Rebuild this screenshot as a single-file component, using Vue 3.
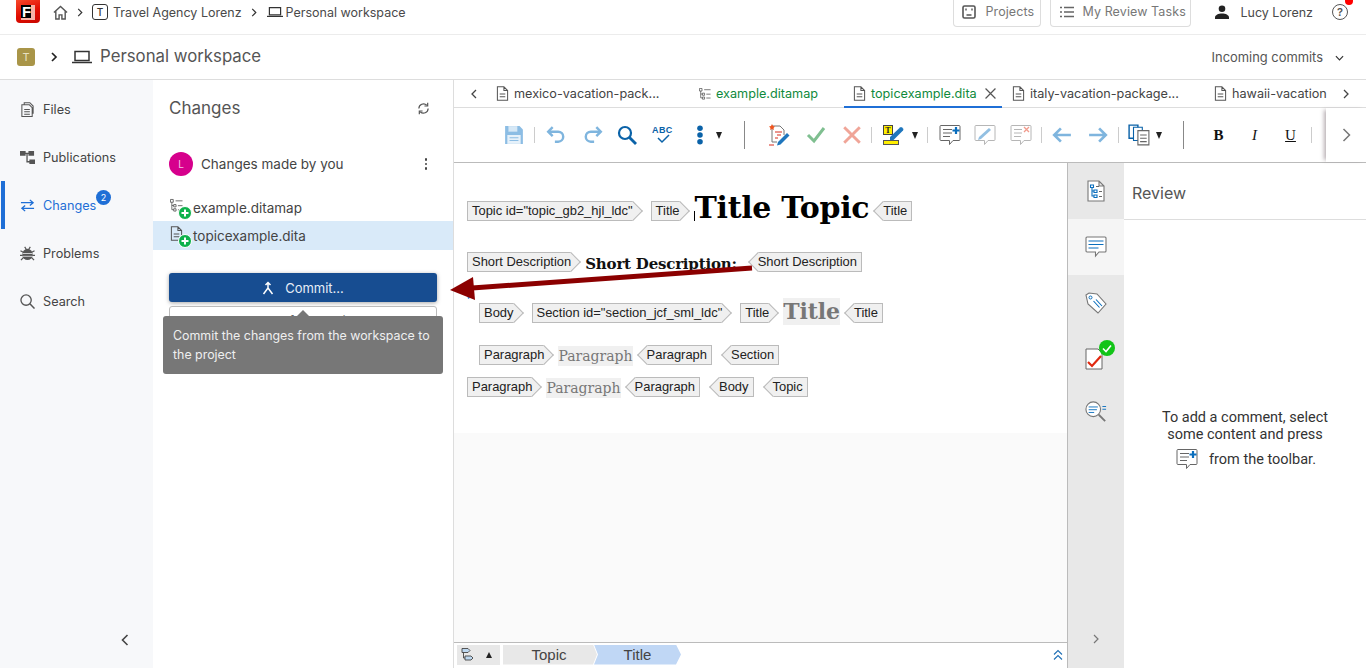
<template>
  <div class="app">
    <svg class="defs" aria-hidden="true">
      <symbol id="doc" viewBox="0 0 14 16">
        <path d="M1.5.8h7l4 4v10.4h-11z M8.5.8v4h4" fill="none" stroke="#555" stroke-width="1.1" />
        <path d="M4 8.500h6M4 11.500h6" stroke="#555" stroke-width="1.1" />
      </symbol>
      <symbol id="map" viewBox="0 0 14 14">
        <path d="M.5.500h3v3h-3zM4 6h2.500v2.500H4zM4 10.500h2.500V13H4z" fill="none" stroke="#555" stroke-width=".9" />
        <path d="M2 3.500V11.500h2M2 7h2M6 2h7.500M8.500 7.200h5M8.500 11.700h5" fill="none" stroke="#555" stroke-width=".9" />
      </symbol>
      <symbol id="laptop" viewBox="0 0 20 14">
        <path d="M3 1.500h14v9H3z" fill="none" stroke="#333" stroke-width="1.500" />
        <path d="M0 12.500h20" stroke="#333" stroke-width="1.500" />
      </symbol>
      <symbol id="comment-plus" viewBox="0 0 22 22">
        <path d="M2 1.500h18a1 1 0 0 1 1 1v13a1 1 0 0 1-1 1h-6l-3.500 4v-4H2a1 1 0 0 1-1-1v-13a1 1 0 0 1 1-1z" fill="#fff" stroke="#666" />
        <path d="M4 5.500h9M4 9h9M4 12.500h7" stroke="#666" />
        <path d="M17 3v7M13.500 6.500h7" stroke="#0a6ebd" stroke-width="2.200" />
      </symbol>
      <symbol id="add-badge" viewBox="0 0 14 14">
        <circle cx="7" cy="7" r="6.500" fill="#0db14b" stroke="#fff" />
        <path d="M7 3.500v7M3.500 7h7" stroke="#fff" stroke-width="2" />
      </symbol>
    </svg>

    <header class="topbar">
      <div class="logo"><span class="logo-f">F</span></div>
      <nav class="crumbs">
        <svg class="home" viewBox="0 0 16 16"><path d="M1 8l7-6.500L15 8M3 6.500V15h3.500v-4.500h3V15H13V6.500" fill="none" stroke="#555" stroke-width="1.500" /></svg>
        <svg class="chev-sm" viewBox="0 0 6 10"><path d="M1 1l4 4-4 4" fill="none" stroke="#333" stroke-width="1.300" /></svg>
        <span class="t-box">T</span>
        <span class="crumb-text">Travel Agency Lorenz</span>
        <svg class="chev-sm" viewBox="0 0 6 10"><path d="M1 1l4 4-4 4" fill="none" stroke="#333" stroke-width="1.300" /></svg>
        <svg class="laptop-sm"><use href="#laptop" /></svg>
        <span class="crumb-text">Personal workspace</span>
      </nav>
      <div class="top-right">
        <button class="top-btn top-btn--projects">
          <svg viewBox="0 0 14 14"><rect x="1" y="1" width="12" height="12" rx="1.500" fill="none" stroke="#555" stroke-width="1.600" /><path d="M4 3.500v2M10 3.500v2M4.500 10h5" stroke="#555" stroke-width="1.400" /></svg>
          Projects
        </button>
        <button class="top-btn top-btn--tasks">
          <svg viewBox="0 0 14 12"><path d="M0 1.500h2M4 1.500h10M0 6h2M4 6h10M0 10.500h2M4 10.500h10" stroke="#666" stroke-width="1.400" /></svg>
          My Review Tasks
        </button>
        <svg class="user" viewBox="0 0 14 14"><circle cx="7" cy="3.800" r="3.300" fill="#222" /><path d="M0 14v-1.500C0 10 3.500 8.500 7 8.500s7 1.500 7 4V14z" fill="#222" /></svg>
        <span class="user-name">Lucy Lorenz</span>
        <span class="help">?<i class="help-dot"></i></span>
      </div>
    </header>

    <div class="subbar">
      <span class="project-badge">T</span>
      <svg class="chev-md" viewBox="0 0 7 10"><path d="M1 1l4 4-4 4" fill="none" stroke="#222" stroke-width="1.700" /></svg>
      <svg class="laptop-md"><use href="#laptop" /></svg>
      <span class="workspace">Personal workspace</span>
      <span class="incoming">Incoming commits</span>
      <svg class="chev-down" viewBox="0 0 10 6"><path d="M1 1l4 4 4-4" fill="none" stroke="#333" stroke-width="1.300" /></svg>
    </div>

    <main class="main">
      <aside class="sidenav">
        <a v-for="item in navItems" :key="item.label" class="nav-item" :class="{ 'nav-item--active': item.active }">
          <svg class="nav-icon" viewBox="0 0 16 16" v-html="item.icon"></svg>
          <span>{{ item.label }}</span>
          <span v-if="item.active" class="nav-badge">2</span>
        </a>
        <svg class="collapse" viewBox="0 0 8 12"><path d="M6.500 1L1.500 6l5 5" fill="none" stroke="#444" stroke-width="1.600" /></svg>
      </aside>

      <section class="changes">
        <div class="changes-head">
          <h2>Changes</h2>
          <svg class="refresh" viewBox="0 0 14 14"><path d="M2 7a5 5 0 0 1 8.500-3.500M12 7a5 5 0 0 1-8.500 3.500" fill="none" stroke="#555" stroke-width="1.300" /><path d="M11.500 .8v3.500H8M2.500 13.200V9.700H6" fill="none" stroke="#555" stroke-width="1.300" /></svg>
        </div>
        <div class="by-you">
          <span class="avatar">L</span>
          <span class="by-you-text">Changes made by you</span>
          <span class="kebab"><i></i><i></i><i></i></span>
        </div>
        <ul class="files">
          <li v-for="file in changedFiles" :key="file.name" :class="{ selected: file.selected }">
            <span class="file-icon">
              <svg class="file-glyph"><use :href="file.icon" /></svg>
              <svg class="file-add"><use href="#add-badge" /></svg>
            </span>
            {{ file.name }}
          </li>
        </ul>
        <div class="actions">
          <button class="commit">
            <svg viewBox="0 0 12 14"><path d="M6 1.500V7L1.500 13M6 7l4.500 6M3.500 4L6 1.500 8.500 4" fill="none" stroke="#fff" stroke-width="1.500" /></svg>
            Commit...
          </button>
          <button class="secondary">Update from Project</button>
          <div class="tooltip">Commit the changes from the workspace to the project</div>
        </div>
      </section>

      <section class="editor">
        <div class="tabs">
          <svg class="tab-nav" viewBox="0 0 6 10"><path d="M5 1L1 5l4 4" fill="none" stroke="#444" stroke-width="1.300" /></svg>
          <div class="tab tab--mexico"><svg><use href="#doc" /></svg>mexico-vacation-pack...</div>
          <div class="tab tab--map tab--green"><svg class="map-icon"><use href="#map" /></svg>example.ditamap</div>
          <div class="tab tab--active tab--green">
            <svg><use href="#doc" /></svg>topicexample.dita
            <svg class="tab-close" viewBox="0 0 10 10"><path d="M.5.500l9 9M9.500.500l-9 9" stroke="#555" stroke-width="1.100" /></svg>
          </div>
          <div class="tab tab--italy"><svg><use href="#doc" /></svg>italy-vacation-package...</div>
          <div class="tab tab--hawaii"><svg><use href="#doc" /></svg>hawaii-vacation</div>
          <svg class="tab-nav tab-nav--right" viewBox="0 0 6 10"><path d="M1 1l4 4-4 4" fill="none" stroke="#444" stroke-width="1.300" /></svg>
        </div>

        <div class="toolbar">
          <span class="tb w36"><svg viewBox="0 0 18 18"><path d="M1 1h13l3 3v13H1z" fill="#8cbde4" /><path d="M4 1h8v5H4z" fill="#d6e8f6" /><path d="M3 9h12v8H3z" fill="#e6f1fa" /><path d="M5 11.500h8M5 14h8" stroke="#8cbde4" /></svg></span>
          <i class="sep"></i>
          <span class="tb w38"><svg viewBox="0 0 18 18"><path d="M6 2L2 6l4 4" fill="none" stroke="#7fb5de" stroke-width="2.200" /><path d="M2.500 6H11a4.500 4.500 0 0 1 0 9H8" fill="none" stroke="#7fb5de" stroke-width="2.200" /></svg></span>
          <span class="tb w36"><svg viewBox="0 0 18 18"><path d="M12 2l4 4-4 4" fill="none" stroke="#7fb5de" stroke-width="2.200" /><path d="M15.500 6H7a4.500 4.500 0 0 0 0 9h3" fill="none" stroke="#7fb5de" stroke-width="2.200" /></svg></span>
          <span class="tb w32"><svg viewBox="0 0 20 20"><circle cx="8" cy="8" r="6" fill="none" stroke="#0a62a8" stroke-width="2.200" /><path d="M12.500 12.500L19 19" stroke="#0a62a8" stroke-width="2.800" /></svg></span>
          <span class="tb w40"><svg class="wide" viewBox="0 0 22 20"><text x="0" y="8" class="abc">ABC</text><path d="M6 13l4 4 7-7" fill="none" stroke="#0a62a8" stroke-width="1.500" /></svg></span>
          <span class="tb w34"><svg viewBox="0 0 6 18"><circle cx="3" cy="3" r="2.500" fill="#0a62a8" /><circle cx="3" cy="9" r="2.500" fill="#0a62a8" /><circle cx="3" cy="15" r="2.500" fill="#0a62a8" /></svg></span>
          <span class="caret"></span>
          <i class="sep sep--tall"></i>
          <span class="tb w36"><svg class="wide" viewBox="0 0 22 22"><path d="M4 2h8l4 4v5M4 2v16h5" fill="#fff" stroke="#777" /><path d="M7 8h7M9 11h4M7 14h3M1 21h5" stroke="#d92c1e" stroke-width="1.200" /><path d="M4 0l1 2 2 .5-1.500 1.500.5 2-2-1-2 1 .5-2L1 2.500 3 2z" fill="#f0541e" /><path d="M10 18l9-9 2.500 2.500-9 9-3.500 1z" fill="#1f76bd" /></svg></span>
          <span class="tb w38"><svg viewBox="0 0 20 18"><path d="M2 9l6 6L18 2" fill="none" stroke="#7fbf90" stroke-width="3" /></svg></span>
          <span class="tb w34"><svg viewBox="0 0 18 18"><path d="M2 2l14 14M16 2L2 16" stroke="#f0a598" stroke-width="2.600" /></svg></span>
          <i class="sep"></i>
          <span class="tb w40"><svg class="wide" viewBox="0 0 22 20"><rect x=".5" y=".5" width="9" height="9" fill="#ffee00" stroke="#444" /><text x="2.200" y="8" class="hl-t">T</text><path d="M7 12L17 2.500a1.500 1.500 0 0 1 2 0l1 1a1.500 1.500 0 0 1 0 2L10.500 15H7z" fill="#1f76bd" /><rect x=".5" y="15.500" width="15" height="4" fill="#ffee00" stroke="#555" /></svg></span>
          <span class="caret"></span>
          <i class="sep sep--after-caret"></i>
          <span class="tb w35"><svg class="wide"><use href="#comment-plus" /></svg></span>
          <span class="tb w36 faded"><svg class="wide" viewBox="0 0 22 22"><path d="M2 1.500h18a1 1 0 0 1 1 1v13a1 1 0 0 1-1 1h-6l-3.500 4v-4H2a1 1 0 0 1-1-1v-13a1 1 0 0 1 1-1z" fill="#fff" stroke="#aaa" /><path d="M5 13l10-9 2 2-10 9-3 1z" fill="#7fb5de" /></svg></span>
          <span class="tb w36 faded"><svg class="wide" viewBox="0 0 22 22"><path d="M2 1.500h18a1 1 0 0 1 1 1v13a1 1 0 0 1-1 1h-6l-3.500 4v-4H2a1 1 0 0 1-1-1v-13a1 1 0 0 1 1-1z" fill="#fff" stroke="#aaa" /><path d="M4 5.500h8M4 9h8M4 12.500h7" stroke="#aaa" /><path d="M14 3l5 5M19 3l-5 5" stroke="#ef8a78" stroke-width="1.300" /></svg></span>
          <i class="sep"></i>
          <span class="tb w36"><svg viewBox="0 0 18 14"><path d="M8 1L2 7l6 6M2 7h15" fill="none" stroke="#7fb5de" stroke-width="2.400" /></svg></span>
          <span class="tb w36"><svg viewBox="0 0 18 14"><path d="M10 1l6 6-6 6M16 7H1" fill="none" stroke="#7fb5de" stroke-width="2.400" /></svg></span>
          <i class="sep"></i>
          <span class="tb w36"><svg class="wide" viewBox="0 0 20 20"><path d="M1 1h8v12H1z" fill="#fff" stroke="#0a62a8" stroke-width="1.300" /><path d="M5 3h8v12H5z" fill="#fff" stroke="#0a62a8" /><path d="M9 6h10v13H9z" fill="#fff" stroke="#666" /><path d="M11 10h6M11 13h6M11 16h6" stroke="#666" /></svg></span>
          <span class="caret"></span>
          <i class="sep sep--tall sep--fmt"></i>
          <span class="tb w36 fmt fmt--b">B</span>
          <span class="tb w36 fmt fmt--i">I</span>
          <span class="tb w36 fmt fmt--u">U</span>
          <i class="sep"></i>
          <div class="tb-more">
            <svg viewBox="0 0 8 14"><path d="M1 1l6 6-6 6" fill="none" stroke="#777" stroke-width="1.500" /></svg>
          </div>
        </div>

        <div class="editor-body">
          <div class="canvas">
            <div class="doc">
              <div v-for="row in docRows" :key="row.id" class="doc-row" :class="row.cls">
                <template v-for="(part, i) in row.parts" :key="i">
                  <span v-if="part.tag" class="tag" :class="part.tag === 'end' ? 'tag--end' : 'tag--start'">{{ part.text }}</span>
                  <span v-else class="content" :class="part.cls">{{ part.text }}</span>
                </template>
              </div>
            </div>
            <div class="breadcrumb">
              <span class="bc-outline">
                <svg viewBox="0 0 14 14"><path d="M.5.500h6l2 2-2 2h-6zM3.500 8h6l2 2-2 2h-6z" fill="#bcd7ef" stroke="#444" stroke-width=".9" /><path d="M2 4.500V10h1.500" fill="none" stroke="#444" stroke-width=".9" /></svg>
                <span class="caret caret--bc"></span>
              </span>
              <span class="bc-item">Topic</span>
              <span class="bc-item bc-item--active">Title</span>
              <svg class="bc-up" viewBox="0 0 10 12"><path d="M1 5.500l4-4 4 4M1 10.500l4-4 4 4" fill="none" stroke="#1f6fb5" stroke-width="1.100" /></svg>
            </div>
          </div>

          <aside class="side-tabs">
            <div class="side-tab"><svg viewBox="0 0 18 22"><path d="M1 1h11l5 5v15H1z M12 1v5h5" fill="#fff" stroke="#777" stroke-width="1.100" /><path d="M3.500 5h3v2.500h-3zM7 10h3v2.500H7zM7 15h3v2.500H7zM5 7.500V16h2M5 11h2" fill="none" stroke="#0a6ebd" stroke-width="1.100" /><path d="M9 6.500h3M12 11.500h3M12 16.500h3" stroke="#666" /></svg></div>
            <div class="side-tab side-tab--active"><svg viewBox="0 0 22 22"><path d="M2 1h18a1 1 0 0 1 1 1v13a1 1 0 0 1-1 1h-6l-3.500 4v-4H2a1 1 0 0 1-1-1V2a1 1 0 0 1 1-1z" fill="#fff" stroke="#777" stroke-width="1.100" /><path d="M3.500 5h15M3.500 8.500h15M3.500 12h10" stroke="#0a6ebd" stroke-width="1.100" /></svg></div>
            <div class="side-tab"><svg viewBox="0 0 22 22"><path d="M1 3l3-2 8 1 9 10-8 9L3 12z" fill="#fff" stroke="#777" stroke-width="1.100" /><circle cx="5.500" cy="5.500" r="1.500" fill="none" stroke="#0a6ebd" /><path d="M8.500 9l6 6.500M11 7.500l6 6.500" stroke="#0a6ebd" stroke-width="1.100" /></svg></div>
            <div class="side-tab side-tab--check">
              <svg viewBox="0 0 18 22"><path d="M1 1h12l4 4v16H1z" fill="#fff" stroke="#666" /><path d="M3 14l4 4 9-10" fill="none" stroke="#e0280f" stroke-width="2.200" /></svg>
              <span class="check-badge"><svg viewBox="0 0 16 16"><circle cx="8" cy="8" r="8" fill="#12c418" /><path d="M4 8.500l3 3 5-6" fill="none" stroke="#fff" stroke-width="1.600" /></svg></span>
            </div>
            <div class="side-tab side-tab--search"><svg viewBox="0 0 24 24"><circle cx="9" cy="9" r="8" fill="#fff" stroke="#777" stroke-width="1.200" /><path d="M4 6.500h10M4 9.500h9M4 12.500h6" stroke="#0a6ebd" /><path d="M15 15l7 7" stroke="#777" stroke-width="2" /><path d="M19 6h4M19 9h4" stroke="#0a6ebd" /></svg></div>
            <svg class="side-collapse" viewBox="0 0 6 10"><path d="M1 1l4 4-4 4" fill="none" stroke="#777" stroke-width="1.200" /></svg>
          </aside>

          <section class="review">
            <h3>Review</h3>
            <div class="review-msg">
              <p>To add a comment, select<br />some content and press</p>
              <p class="review-line"><svg><use href="#comment-plus" /></svg>from the toolbar.</p>
            </div>
          </section>
        </div>
      </section>
    </main>

    <svg class="arrow" viewBox="0 0 320 40">
      <path d="M17 33l3 4-2 1z" fill="#2f86e0" />
      <path d="M302 7L22 27" stroke="#8b0000" stroke-width="5" />
      <path d="M0 29L23 16l2 23z" fill="#8b0000" />
    </svg>
  </div>
</template>

<script setup>
const navItems = [
  { label: 'Files', icon: '<path d="M2 3h8l3 3v9.500H2zM4.500 3V.8h6l3.500 3.500V12h-1" fill="none" stroke="#555" stroke-width="1.100" /><path d="M4.500 8h6M4.500 10.500h6M4.500 13h6" stroke="#555" stroke-width="1.100" />' },
  { label: 'Publications', icon: '<path d="M0 1h6v5H0zM9 1h6v5H9zM10 10h6v5h-6z" fill="#555" /><path d="M5 3.500h5M7.500 4v8.500H11" fill="none" stroke="#555" stroke-width="1.400" />' },
  { label: 'Changes', active: true, icon: '<path d="M1 5h13M10.500 2l3.500 3-3.500 3M15 11H2M5.500 8L2 11l3.500 3" fill="none" stroke="#1f6fd6" stroke-width="1.400" />' },
  { label: 'Problems', icon: '<ellipse cx="8" cy="9" rx="5.500" ry="6" fill="#555" /><path d="M.5 5l3.500 2M15.500 5L12 7M0 10h3M16 10h-3M1 15l3-3M15 15l-3-3M5 1l2 3M11 1L9 4" stroke="#555" stroke-width="1.300" /><path d="M3 8h10M3 11h10" stroke="#f7f8fa" stroke-width=".8" />' },
  { label: 'Search', icon: '<circle cx="6.500" cy="6.500" r="5.500" fill="none" stroke="#555" stroke-width="1.400" /><path d="M10.500 10.500L15.500 15.500" stroke="#555" stroke-width="1.600" />' }
]

const changedFiles = [
  { name: 'example.ditamap', icon: '#map' },
  { name: 'topicexample.dita', icon: '#doc', selected: true }
]

const docRows = [
  { id: 'title', parts: [
    { tag: 'start', text: 'Topic id="topic_gb2_hjl_ldc"' },
    { tag: 'start', text: 'Title' },
    { text: 'Title Topic', cls: 'content--h1' },
    { tag: 'end', text: 'Title' }
  ] },
  { id: 'short', cls: 'doc-row--short', parts: [
    { tag: 'start', text: 'Short Description' },
    { text: 'Short Description:', cls: 'content--short' },
    { tag: 'end', text: 'Short Description' }
  ] },
  { id: 'section', cls: 'doc-row--section', parts: [
    { tag: 'start', text: 'Body' },
    { tag: 'start', text: 'Section id="section_jcf_sml_ldc"' },
    { tag: 'start', text: 'Title' },
    { text: 'Title', cls: 'content--h2' },
    { tag: 'end', text: 'Title' }
  ] },
  { id: 'para1', cls: 'doc-row--para1', parts: [
    { tag: 'start', text: 'Paragraph' },
    { text: 'Paragraph', cls: 'content--p' },
    { tag: 'end', text: 'Paragraph' },
    { tag: 'end', text: 'Section' }
  ] },
  { id: 'para2', cls: 'doc-row--para2', parts: [
    { tag: 'start', text: 'Paragraph' },
    { text: 'Paragraph', cls: 'content--p' },
    { tag: 'end', text: 'Paragraph' },
    { tag: 'end', text: 'Body' },
    { tag: 'end', text: 'Topic' }
  ] }
]
</script>

<style>
html,
body {
  margin: 0;
  overflow: hidden;
}
</style>

<style scoped>
.app {
  position: relative;
  display: flex;
  flex-direction: column;
  width: 1366px;
  height: 668px;
  overflow: hidden;
  background: #fff;
  color: #444;
  font-family: Inter, "Liberation Sans", sans-serif;
  font-size: 12.500px;
}

.defs {
  position: absolute;
  width: 0;
  height: 0;
}

/* top bar */
.topbar {
  display: flex;
  align-items: flex-start;
  flex: 0 0 35px;
  box-sizing: border-box;
  height: 35px;
  padding-left: 16px;
  border-bottom: 1px solid #ececec;
}

.logo {
  display: flex;
  align-items: center;
  justify-content: center;
  width: 24px;
  height: 23px;
  border-radius: 0 0 4px 4px;
  background: linear-gradient(160deg, #f8482a, #e00c00 55%, #c80800);
}

.logo-f {
  display: block;
  width: 14px;
  height: 15px;
  padding-bottom: 2px;
  background: linear-gradient(90deg, #000 72%, #f6b2a6 72%);
  border-bottom: 2px solid #f6b2a6;
  margin-top: 2px;
  padding-right: 3px;
  box-sizing: border-box;
  color: #fff;
  font: 700 15px/14px "Liberation Sans", sans-serif;
  text-align: center;
}

.crumbs {
  display: flex;
  align-items: center;
  margin-left: 13px;
  height: 24px;
}

.home {
  width: 15px;
  height: 15px;
}

.chev-sm {
  width: 6px;
  height: 9px;
  margin: 0 9px;
}

.t-box {
  display: flex;
  align-items: center;
  justify-content: center;
  box-sizing: border-box;
  width: 16px;
  height: 16px;
  margin-right: 5px;
  border: 1px solid #333;
  border-radius: 3px;
  color: #333;
  font-size: 10px;
  font-weight: 500;
}

.crumb-text {
  color: #4a4a4a;
}

.laptop-sm {
  width: 16px;
  height: 12px;
  margin: 0 3px 0 1px;
}

.top-right {
  display: flex;
  align-items: center;
  height: 24px;
  margin-left: auto;
}

.top-btn {
  display: flex;
  align-items: center;
  align-self: flex-start;
  box-sizing: border-box;
  height: 27px;
  padding: 0 0 3px 8px;
  border: 1px solid #ddd;
  border-top: 0;
  border-radius: 0 0 4px 4px;
  background: #fff;
  color: #777;
  font: 12.500px Inter, "Liberation Sans", sans-serif;
  letter-spacing: 0.1px;
}

.top-btn svg {
  width: 14px;
  height: 14px;
  margin-right: 9px;
}

.top-btn--projects {
  width: 88px;
}

.top-btn--tasks {
  width: 141px;
  margin-left: 9px;
}

.top-btn--tasks svg {
  margin-left: 1px;
  margin-right: 8px;
}

.user {
  width: 14px;
  height: 14px;
  margin-left: 24px;
}

.user-name {
  margin-left: 11px;
  color: #4a4a4a;
}

.help {
  position: relative;
  display: flex;
  align-items: center;
  justify-content: center;
  box-sizing: border-box;
  width: 16px;
  height: 16px;
  margin-left: 19px;
  margin-right: 18px;
  border: 1.200px solid #555;
  border-radius: 50%;
  color: #555;
  font-size: 11px;
  font-weight: 600;
}

.help-dot {
  position: absolute;
  top: -8px;
  right: -6px;
  width: 8px;
  height: 8px;
  border-radius: 50%;
  background: #f00;
}

/* project bar */
.subbar {
  display: flex;
  align-items: center;
  flex: 0 0 45px;
  box-sizing: border-box;
  height: 45px;
  padding-left: 17px;
  border-bottom: 1px solid #ddd;
}

.project-badge {
  display: flex;
  align-items: center;
  justify-content: center;
  width: 18px;
  height: 18px;
  border-radius: 3px;
  background: #a99548;
  color: #e8e0c0;
  font-size: 11px;
}

.chev-md {
  width: 7px;
  height: 10px;
  margin-left: 16px;
}

.laptop-md {
  width: 20px;
  height: 14px;
  margin-left: 14px;
}

.workspace {
  margin-left: 8px;
  margin-bottom: 2px;
  color: #555;
  font-size: 16.800px;
}

.incoming {
  margin-left: auto;
  color: #555;
  font-size: 12.900px;
}

.chev-down {
  width: 9px;
  height: 6px;
  margin: 1px 22px 0 12px;
}

/* main */
.main {
  display: flex;
  flex: 1;
  min-height: 0;
}

.sidenav {
  position: relative;
  flex: 0 0 153px;
  box-sizing: border-box;
  padding-top: 5px;
  background: #f7f8fa;
}

.nav-item {
  position: relative;
  display: flex;
  align-items: center;
  height: 48px;
  padding-left: 20px;
  color: #444;
  font-size: 12.700px;
}

.nav-item--active {
  color: #1f6fd6;
}

.nav-item--active::before {
  content: "";
  position: absolute;
  top: 0;
  left: 1px;
  width: 4px;
  height: 48px;
  background: #1f6fd6;
}

.nav-icon {
  width: 15px;
  height: 15px;
  margin-right: 8px;
}

.nav-badge {
  position: absolute;
  top: 9px;
  left: 96px;
  width: 15px;
  height: 15px;
  border-radius: 50%;
  background: #1f6fd6;
  color: #fff;
  font-size: 9px;
  line-height: 15px;
  text-align: center;
}

.collapse {
  position: absolute;
  bottom: 22px;
  left: 120px;
  width: 10px;
  height: 12px;
}

.changes {
  flex: 0 0 301px;
  box-sizing: border-box;
  border-right: 1px solid #ddd;
}

.changes-head {
  display: flex;
  align-items: center;
  justify-content: space-between;
  height: 56px;
  padding: 0 23px 0 16px;
}

.changes-head h2 {
  margin: 0;
  color: #555;
  font-size: 17px;
  font-weight: 400;
}

.refresh {
  width: 13px;
  height: 13px;
}

.by-you {
  display: flex;
  align-items: center;
  height: 24px;
  margin-top: 16px;
  padding: 0 26px 0 16px;
}

.avatar {
  display: flex;
  align-items: center;
  justify-content: center;
  width: 24px;
  height: 24px;
  border-radius: 50%;
  background: #d6008c;
  color: #f4c4e2;
  font-size: 10px;
}

.by-you-text {
  margin-left: 8px;
  color: #444;
  font-size: 13.500px;
}

.kebab {
  display: flex;
  flex-direction: column;
  gap: 2px;
  margin-left: auto;
}

.kebab i {
  width: 2.500px;
  height: 2.500px;
  border-radius: 50%;
  background: #444;
}

.files {
  margin: 17px 0 0;
  padding: 0;
  list-style: none;
}

.files li {
  display: flex;
  align-items: center;
  box-sizing: border-box;
  height: 28px;
  padding-left: 17px;
  color: #444;
  font-size: 13.500px;
}

.files li:first-child {
  padding-top: 2px;
}

.files li.selected {
  height: 29px;
  background: #d9eaf9;
}

.file-icon {
  position: relative;
  width: 23px;
  height: 22px;
}

.file-glyph {
  position: absolute;
  top: 1px;
  left: 0;
  width: 13px;
  height: 15px;
}

.file-add {
  position: absolute;
  top: 9px;
  left: 8px;
  width: 14px;
  height: 14px;
}

.actions {
  position: relative;
  margin: 23px 16px 0;
}

.commit {
  display: flex;
  align-items: center;
  justify-content: center;
  width: 268px;
  height: 29px;
  border: 0;
  border-radius: 3px;
  background: #174d91;
  box-shadow: 0 1px 4px rgba(0, 0, 0, 0.35);
  color: #e6edf6;
  font: 13px Inter, "Liberation Sans", sans-serif;
}

.commit svg {
  width: 12px;
  height: 14px;
  margin-right: 11px;
}

.secondary {
  display: block;
  width: 268px;
  height: 29px;
  margin-top: 4px;
  border: 1px solid #bbb;
  border-radius: 3px;
  background: #fff;
  color: #666;
  font: 13px Inter, "Liberation Sans", sans-serif;
}

.tooltip {
  position: absolute;
  top: 43px;
  left: -6px;
  box-sizing: border-box;
  width: 280px;
  height: 58px;
  padding: 10px 10px;
  border-radius: 3px;
  background: #777;
  color: #efefef;
  font-size: 12.400px;
  line-height: 19px;
}

.tooltip::before {
  content: "";
  position: absolute;
  top: -6px;
  left: 134px;
  border-right: 6px solid transparent;
  border-bottom: 6px solid #777;
  border-left: 6px solid transparent;
}

/* editor */
.editor {
  display: flex;
  flex-direction: column;
  flex: 1;
  min-width: 0;
}

.tabs {
  position: relative;
  display: flex;
  align-items: center;
  flex: 0 0 28px;
  box-sizing: border-box;
  padding-left: 17px;
  border-bottom: 1px solid #ddd;
  font-size: 12.650px;
  white-space: nowrap;
}

.tab-nav {
  width: 6px;
  height: 10px;
}

.tab-nav--right {
  position: absolute;
  left: 889px;
}

.tab {
  position: relative;
  display: flex;
  align-items: center;
  height: 27px;
  color: #444;
}

.tab svg {
  width: 13px;
  height: 15px;
  margin-right: 5px;
}

.tab--mexico {
  margin-left: 19px;
  width: 203px;
}

.tab--map {
  width: 145px;
}

.map-icon {
  width: 12px !important;
  height: 12px !important;
}

.tab--green {
  color: #0f8a3c;
}

.tab--active {
  box-sizing: border-box;
  width: 158px;
  padding-left: 9px;
  margin-right: 10px;
}

.tab--active::after {
  content: "";
  position: absolute;
  left: 0;
  right: 0;
  bottom: -1px;
  height: 2px;
  background: #1f6fd6;
}

.tab .tab-close {
  width: 11px;
  height: 11px;
  margin-left: 8px;
  margin-right: 0;
}

.tab--italy {
  width: 202px;
}

.toolbar {
  position: relative;
  display: flex;
  align-items: center;
  flex: 0 0 55px;
  box-sizing: border-box;
  padding-left: 42px;
  border-bottom: 1px solid #bbb;
  background: #fff;
}

.tb {
  display: flex;
  align-items: center;
  justify-content: center;
  height: 30px;
}

.tb svg {
  width: 20px;
  height: 20px;
}

.tb svg.wide {
  width: 22px;
  height: 22px;
}

.w32 { flex: 0 0 32px; }
.w34 { flex: 0 0 34px; }
.w35 { flex: 0 0 35px; }
.w36 { flex: 0 0 36px; }
.w38 { flex: 0 0 38px; }
.w40 { flex: 0 0 40px; }

.faded {
  opacity: 0.85;
}

.abc {
  fill: #0a62a8;
  font: 700 9px "Liberation Sans", sans-serif;
  letter-spacing: 0.4px;
}

.hl-t {
  fill: #222;
  font: 700 8px "Liberation Serif", serif;
}

.sep {
  flex: 0 0 1px;
  height: 16px;
  margin: 0 2px;
  background: #ccc;
}

.sep--tall {
  height: 28px;
  margin: 0 16px 0 22px;
  background: #888;
}

.sep--fmt {
  margin-right: 17px;
  margin-left: 21px;
}

.sep--after-caret {
  margin: 0 4px 0 9px;
}

.caret {
  display: block;
  flex: 0 0 auto;
  width: 0;
  height: 0;
  margin-left: -1.500px;
  border-top: 7px solid #222;
  border-right: 3.500px solid transparent;
  border-left: 3.500px solid transparent;
}

.fmt {
  color: #111;
  font: 15px "Liberation Serif", serif;
}

.fmt--b { font-weight: 700; }
.fmt--i { font-style: italic; }
.fmt--u { text-decoration: underline; }

.tb-more {
  position: absolute;
  top: 0;
  right: 0;
  display: flex;
  align-items: center;
  justify-content: center;
  width: 40px;
  height: 54px;
  background: #fff;
  box-shadow: -4px 0 4px -2px rgba(80, 60, 70, 0.4);
}

.tb-more svg {
  width: 9px;
  height: 14px;
}

.editor-body {
  display: flex;
  flex: 1;
  min-height: 0;
}

.canvas {
  display: flex;
  flex-direction: column;
  flex: 0 0 614px;
  box-sizing: border-box;
  border-right: 1px solid #bbb;
  background: #fafafa;
}

.doc {
  flex: 1;
  box-sizing: border-box;
  padding: 38px 0 0 13px;
  background: linear-gradient(#fff 270px, #fafafa 270px);
}

.doc-row {
  display: flex;
  align-items: center;
  height: 20px;
}

.doc-row--short {
  margin-top: 31px;
}

.doc-row--section {
  margin-top: 31px;
  padding-left: 12px;
}

.doc-row--para1 {
  margin-top: 22px;
  padding-left: 12px;
}

.doc-row--para2 {
  margin-top: 12px;
}

.tag {
  position: relative;
  z-index: 0;
  display: block;
  box-sizing: border-box;
  height: 20px;
  border: 1px solid #bbb;
  background: #f0f0f0;
  color: #222;
  font: 12.950px/18px "Liberation Sans", sans-serif;
  white-space: nowrap;
}

.tag::after {
  content: "";
  position: absolute;
  z-index: -1;
  top: 2px;
  box-sizing: border-box;
  width: 14px;
  height: 14px;
  background: #f0f0f0;
  transform: rotate(45deg);
}

.tag--start {
  margin-right: 18px;
  padding: 0 0 0 4px;
  border-right: 0;
}

.tag--start::after {
  right: -7px;
  border-top: 1px solid #bbb;
  border-right: 1px solid #bbb;
}

.tag--end {
  margin-left: 14px;
  padding: 0 4px 0 0;
  border-left: 0;
}

.tag--end + .tag--end {
  margin-left: 19px;
}

.tag--end::after {
  left: -7px;
  border-bottom: 1px solid #bbb;
  border-left: 1px solid #bbb;
}

.content {
  margin-left: -4px;
  font-family: "DejaVu Serif", serif;
  white-space: nowrap;
}

.content--h1 {
  margin-left: -4px;
  margin-bottom: 6px;
  padding-left: 0;
  color: #000;
  font-size: 30px;
  font-weight: 700;
  letter-spacing: -0.3px;
  line-height: 26px;
  border-left: 1px solid #000;
  border-image: linear-gradient(transparent 60%, #000 60%) 1;
}

.content--short {
  margin-top: 4px;
  margin-right: 7px;
  color: #111;
  font-size: 15px;
  font-weight: 700;
  letter-spacing: -0.2px;
}

.content--h2 {
  margin-bottom: 3px;
  background: #f0f0f0;
  color: #777;
  font-size: 22px;
  font-weight: 700;
  letter-spacing: -0.1px;
  line-height: 27px;
}

.content--p {
  background: #f0f0f0;
  color: #777;
  font-size: 14px;
  line-height: 20px;
  margin-top: 2px;
}

.breadcrumb {
  display: flex;
  align-items: center;
  flex: 0 0 26px;
  box-sizing: border-box;
  padding-left: 3px;
  padding-bottom: 2px;
  border-top: 1px solid #bbb;
  background: #fff;
  font: 15px "Liberation Sans", sans-serif;
}

.bc-outline {
  display: flex;
  align-items: center;
  box-sizing: border-box;
  width: 43px;
  height: 20px;
  padding-left: 4px;
  background: #e8e8e8;
}

.bc-outline svg {
  width: 15px;
  height: 14px;
  margin-right: 10px;
}

.caret--bc {
  margin-left: 0;
  border-top: 0;
  border-bottom: 6px solid #222;
}

.bc-item {
  display: flex;
  align-items: center;
  justify-content: center;
  box-sizing: border-box;
  width: 94px;
  height: 20px;
  margin-left: 3px;
  padding-right: 2px;
  background: #e8e8e8;
  clip-path: polygon(0 0, calc(100% - 4px) 0, 100% 50%, calc(100% - 4px) 100%, 0 100%);
}

.bc-item--active {
  width: 87px;
  margin-left: -3px;
  padding-right: 0;
  background: #c0d7f5;
  clip-path: polygon(0 0, calc(100% - 5px) 0, 100% 50%, calc(100% - 5px) 100%, 0 100%, 4px 50%);
}

.bc-up {
  width: 10px;
  height: 12px;
  margin-left: auto;
  margin-right: 4px;
}

/* side tabs */
.side-tabs {
  position: relative;
  flex: 0 0 56px;
  background: #e8e8e8;
}

.side-tab {
  position: relative;
  display: flex;
  align-items: center;
  justify-content: center;
  height: 56px;
}

.side-tab > svg {
  width: 22px;
  height: 22px;
}

.side-tab--active {
  background: #f5f5f5;
}

.side-tab--check > svg {
  margin-right: 5px;
}

.side-tab--search {
  margin-top: -3px;
}

.check-badge {
  position: absolute;
  top: 9px;
  left: 31px;
  width: 16px;
  height: 16px;
}

.check-badge svg {
  display: block;
  width: 16px;
  height: 16px;
}

.side-collapse {
  position: absolute;
  bottom: 24px;
  left: 25px;
  width: 6px;
  height: 10px;
}

.review {
  display: flex;
  flex-direction: column;
  flex: 1;
  background: #fff;
}

.review h3 {
  box-sizing: border-box;
  flex: 0 0 57px;
  height: 57px;
  margin: 0;
  padding: 20px 0 0 8px;
  border-bottom: 1px solid #ddd;
  color: #555;
  font-size: 16px;
  font-weight: 400;
}

.review-msg {
  margin-top: 189px;
  color: #333;
  font-family: Roboto, "Liberation Sans", sans-serif;
  font-size: 14.500px;
  line-height: 17px;
  text-align: center;
}

.review-msg p {
  margin: 0;
}

.review-msg .review-line {
  display: flex;
  align-items: center;
  justify-content: center;
  height: 24px;
  margin: 4px 0 0 2px;
}

.review-line svg {
  width: 22px;
  height: 22px;
  margin-right: 11px;
}

.arrow {
  position: absolute;
  top: 261px;
  left: 450px;
  width: 320px;
  height: 40px;
  pointer-events: none;
}
</style>
